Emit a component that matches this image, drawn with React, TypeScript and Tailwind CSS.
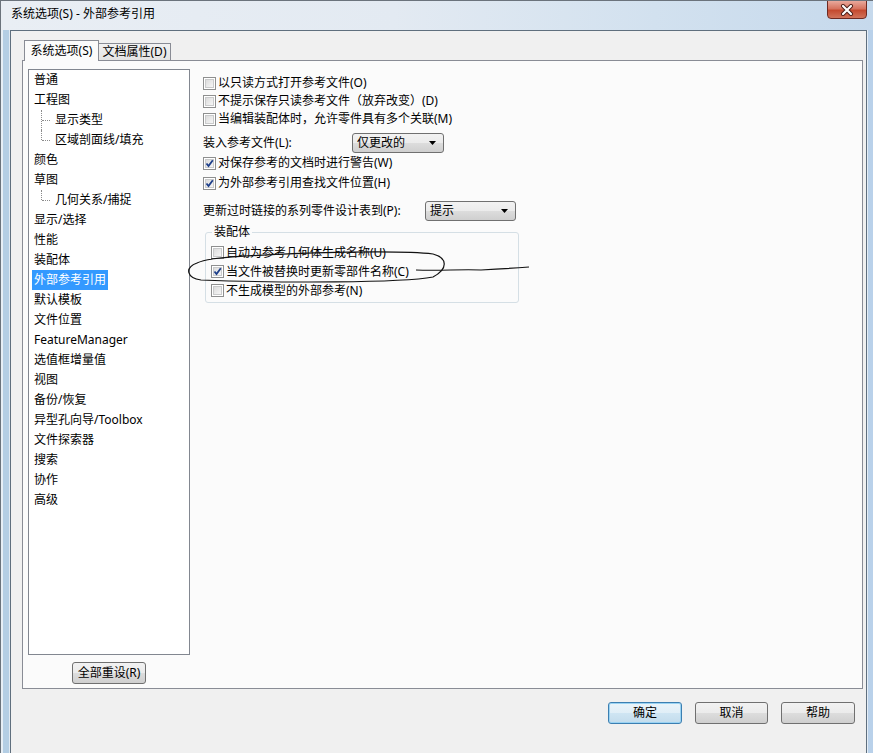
import React from "react";

const treeItems = [
  { label: "普通" },
  { label: "工程图" },
  { label: "显示类型", child: true },
  { label: "区域剖面线/填充", child: true, last: true },
  { label: "颜色" },
  { label: "草图" },
  { label: "几何关系/捕捉", child: true, last: true, single: true },
  { label: "显示/选择" },
  { label: "性能" },
  { label: "装配体" },
  { label: "外部参考引用", selected: true },
  { label: "默认模板" },
  { label: "文件位置" },
  { label: "FeatureManager" },
  { label: "选值框增量值" },
  { label: "视图" },
  { label: "备份/恢复" },
  { label: "异型孔向导/Toolbox" },
  { label: "文件探索器" },
  { label: "搜索" },
  { label: "协作" },
  { label: "高级" },
];

function CheckBox({ checked }: { checked?: boolean }) {
  return (
    <span className="relative w-[13px] h-[13px] shrink-0 border border-[#8e8f8f] bg-white p-[1px]">
      <span className="block w-full h-full border border-[#c9cacb] bg-gradient-to-br from-[#dcdcdc] to-[#f6f6f6]" />
      {checked && (
        <svg className="absolute left-0 top-0" width="11" height="11" viewBox="0 0 11 11">
          <path d="M2.5 5.5 L4.5 8 L8.8 2.2" fill="none" stroke="#1e3f8a" strokeWidth="1.8" />
        </svg>
      )}
    </span>
  );
}

function CheckRow({ text, checked, h = "h-[18px]" }: { text: string; checked?: boolean; h?: string }) {
  return (
    <div className={`flex items-center gap-[2px] ${h}`}>
      <CheckBox checked={checked} />
      <span className="leading-none">{text}</span>
    </div>
  );
}

function Combo({ text, w }: { text: string; w: string }) {
  return (
    <div
      className={`${w} h-[20px] rounded-[3px] border border-[#707070] flex items-center justify-between pl-[4px] pr-[7px] bg-[linear-gradient(#f2f2f2_0%,#ebebeb_50%,#dddddd_50%,#cfcfcf_100%)]`}
    >
      <span className="leading-none">{text}</span>
      <svg width="7" height="4" viewBox="0 0 7 4">
        <path d="M0 0 H7 L3.5 4 Z" fill="#000" />
      </svg>
    </div>
  );
}

function Button({ text, focused, w = "w-[74px]" }: { text: string; focused?: boolean; w?: string }) {
  return (
    <div
      className={`${w} h-[22px] rounded-[3px] border flex items-center justify-center ${
        focused
          ? "border-[#3c7fb1] shadow-[inset_0_0_0_1px_#9ad3f3] bg-[linear-gradient(#eaf4fa_0%,#e0eef7_50%,#cfe5f3_50%,#c3dcec_100%)]"
          : "border-[#707070] bg-[linear-gradient(#f2f2f2_0%,#ebebeb_50%,#dddddd_50%,#cfcfcf_100%)]"
      }`}
    >
      <span className="leading-none">{text}</span>
    </div>
  );
}

export default function App() {
  return (
    <div className="relative w-[873px] h-[753px] overflow-hidden border-l border-t border-[#6b737c] bg-[#b8d0e6] flex flex-col text-[12px] text-black font-['Noto_Sans','Noto_Sans_CJK_SC',sans-serif]">
      {/* Title bar */}
      <div className="h-[29px] shrink-0 flex items-center pl-[10px] bg-[linear-gradient(90deg,#e9eef4_0%,#e3eaf2_45%,#d2e1ef_75%,#c6d9ec_100%)] relative">
        <span className="leading-none -mt-[3px]">系统选项(S) - 外部参考引用</span>
        <div className="absolute right-[6px] -top-px w-[40px] h-[19px] rounded-b-[4px] border border-[#6d2a22] bg-[linear-gradient(#e9a99c_0%,#d6735f_45%,#c44a2f_55%,#d1735a_100%)] flex items-center justify-center">
          <svg width="14" height="12" viewBox="0 0 14 12">
            <path d="M3 2 L11 10 M11 2 L3 10" stroke="#4a1d16" strokeWidth="4" strokeLinecap="round" />
            <path d="M3 2 L11 10 M11 2 L3 10" stroke="#ffffff" strokeWidth="2.2" strokeLinecap="round" />
          </svg>
        </div>
      </div>

      {/* Body */}
      <div className="flex-1 flex min-h-0">
        <div className="w-[9px] shrink-0 border-l-[2px] border-r border-l-[#e6eef5] border-r-[#dfe9f2] bg-[#b4cee4]" />

        <div className="w-[857px] shrink-0 border-l border-t border-r border-[#5f6f7e] bg-[#f0f0f0] flex flex-col pl-[11px] pt-[9px]">
          {/* Tabs */}
          <div className="flex items-end h-[20px] relative z-10">
            <div className="ml-[2px] w-[75px] h-[21px] -mb-px border border-b-0 border-[#898c95] bg-[#fbfbfb] flex items-center justify-center">
              <span className="leading-none">系统选项(S)</span>
            </div>
            <div className="w-[72px] h-[17px] border border-l-0 border-b-0 border-[#898c95] bg-[linear-gradient(#f2f2f2,#e3e3e3)] flex items-center justify-center">
              <span className="leading-none">文档属性(D)</span>
            </div>
          </div>

          {/* Tab panel */}
          <div className="w-[841px] h-[629px] border border-[#898c95] bg-[#fbfbfb] flex pl-[5px] pt-[8px]">
            <div className="flex flex-col items-center">
              <div className="w-[162px] h-[586px] border border-[#828790] bg-white">
                {treeItems.map((it) => (
                  <div key={it.label} className={`relative h-[20px] flex items-center ${it.child ? "pl-[24px]" : "pl-[3px]"}`}>
                    {it.child && (
                      <>
                        <span
                          className={`absolute left-[12px] border-l border-dotted border-[#8c8c8c] ${
                            it.last ? "top-0 h-[10px]" : "top-0 h-[20px]"
                          }`}
                        />
                        <span className="absolute left-[13px] top-[10px] w-[8px] border-t border-dotted border-[#8c8c8c]" />
                      </>
                    )}
                    <span
                      className={`leading-none px-[2px] py-[4px] ${it.selected ? "bg-[#3399ff] text-white" : ""}`}
                    >
                      {it.label}
                    </span>
                  </div>
                ))}
              </div>
              <div className="mt-[7px]">
                <Button text="全部重设(R)" w="w-[74px]" />
              </div>
            </div>

            {/* Right column */}
            <div className="ml-[13px] pt-[5px] flex flex-col">
              <CheckRow text="以只读方式打开参考文件(O)" />
              <CheckRow text="不提示保存只读参考文件（放弃改变）(D)" />
              <CheckRow text="当编辑装配体时，允许零件具有多个关联(M)" />
              <div className="mt-[5px] flex items-center">
                <span className="w-[149px] leading-none">装入参考文件(L):</span>
                <Combo text="仅更改的" w="w-[92px]" />
              </div>
              <CheckRow text="对保存参考的文档时进行警告(W)" checked h="h-[20px]" />
              <CheckRow text="为外部参考引用查找文件位置(H)" checked h="h-[20px]" />
              <div className="mt-[8px] flex items-center">
                <span className="w-[222px] leading-none">更新过时链接的系列零件设计表到(P):</span>
                <Combo text="提示" w="w-[91px]" />
              </div>

              {/* Group box */}
              <div className="relative mt-[11px] ml-[2px] w-[314px] h-[71px] rounded-[3px] border border-[#d5dfe5] pl-[5px] pt-[10px]">
                <span className="absolute left-[6px] -top-[7px] px-[2px] bg-[#fbfbfb] leading-none">装配体</span>
                <CheckRow text="自动为参考几何体生成名称(U)" h="h-[19px]" />
                <CheckRow text="当文件被替换时更新零部件名称(C)" checked h="h-[19px]" />
                <CheckRow text="不生成模型的外部参考(N)" h="h-[19px]" />
              </div>
            </div>
          </div>

          {/* Dialog buttons */}
          <div className="mt-[13px] flex justify-end gap-[13px] pr-[11px]">
            <Button text="确定" focused />
            <Button text="取消" w="w-[73px]" />
            <Button text="帮助" />
          </div>
        </div>

        <div className="flex-1 border-l border-[#e4edf6] bg-[#b9d1ea]" />
      </div>

      {/* Hand-drawn annotation */}
      <svg className="absolute left-0 top-0 pointer-events-none" width="873" height="753" viewBox="0 0 873 753">
        <path
          d="M210 258 C280 251 400 249 432 253 C447 257 447 268 432 276 C400 282 280 282 200 279 C186 277 183 267 196 262 C200 260 205 259 212 258"
          fill="none"
          stroke="#111"
          strokeWidth="1.2"
        />
        <path d="M415 269 C440 270 460 268 480 269 C500 268 515 267 528 266" fill="none" stroke="#111" strokeWidth="1.2" />
      </svg>
    </div>
  );
}
